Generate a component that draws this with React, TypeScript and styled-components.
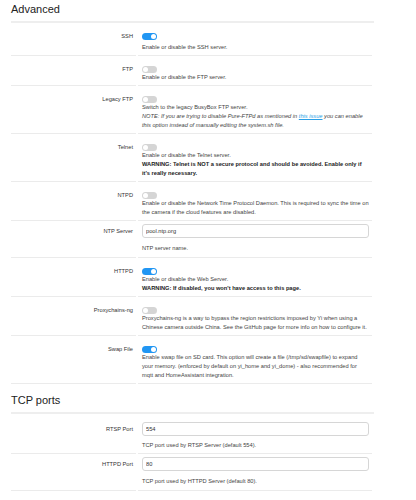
import React from 'react';
import styled, { createGlobalStyle } from 'styled-components';

const GlobalStyle = createGlobalStyle`
  html, body {
    margin: 0;
    padding: 0;
    background: #fff;
  }
  body {
    font-family: "Liberation Sans", Arial, Helvetica, sans-serif;
    color: #444;
  }
`;

const Page = styled.div`
  width: 363px;
  padding: 0 0 0 11px;
`;

const SectionTitle = styled.h2<{ $spaced?: boolean }>`
  margin: ${p => (p.$spaced ? 10 : 3)}px 0 0;
  padding-bottom: 5px;
  font-size: 11px;
  line-height: 13px;
  font-weight: 300;
  color: #222;
  border-bottom: 2px solid #eeeeee;
`;

const Row = styled.div`
  display: grid;
  grid-template-columns: 125px 234px;
  column-gap: 2px;
`;

const Label = styled.div<{ $top: number; $h: number }>`
  padding: ${p => p.$top}px 3px 0 0;
  text-align: right;
  font-size: 5.7px;
  line-height: ${p => p.$h}px;
  color: #333;
  border-bottom: 1px solid #ebebeb;
`;

const Cell = styled.div<{ $top: number; $bottom: number }>`
  padding: ${p => p.$top}px 3px ${p => p.$bottom}px 4px;
  border-bottom: 1px solid #ebebeb;
`;

const Toggle = styled.span<{ $on?: boolean }>`
  position: relative;
  display: block;
  width: 15px;
  height: 7px;
  border-radius: 4px;
  background: ${p => (p.$on ? '#2196f3' : '#d5d5d5')};

  &::after {
    content: '';
    position: absolute;
    top: 1px;
    left: ${p => (p.$on ? 9 : 1)}px;
    width: 5px;
    height: 5px;
    border-radius: 50%;
    background: #fff;
  }
`;

const TextInput = styled.input`
  display: block;
  box-sizing: border-box;
  width: 227px;
  height: 14px;
  margin: 0;
  padding: 0 3px;
  border: 1px solid #d6d6d6;
  border-radius: 3px;
  font-family: "Liberation Sans", Arial, sans-serif;
  font-size: 5.7px;
  color: #333;
  background: #fff;
  outline: none;
`;

const Desc = styled.div<{ $gap: number }>`
  margin-top: ${p => p.$gap}px;
  font-size: 5.7px;
  line-height: 9px;
  color: #444;
  white-space: nowrap;

  em {
    font-style: italic;
  }
  strong {
    color: #222;
  }
  a {
    color: #2a9fe6;
  }
`;

type FieldProps = {
  label: string;
  kind: 'toggle' | 'input';
  first?: boolean;
  on?: boolean;
  value?: string;
  children: React.ReactNode;
};

const Field = ({ label, kind, first, on, value, children }: FieldProps) => {
  const isToggle = kind === 'toggle';
  const top = isToggle ? 10 : first ? 8 : 3;
  const gap = isToggle ? (first ? 3 : 0) : first ? 5 : 6;
  const bottom = isToggle ? 3 : first ? 3 : 4;
  const h = isToggle ? 7 : 14;

  return (
    <Row>
      <Label $top={top} $h={h}>{label}</Label>
      <Cell $top={top} $bottom={bottom}>
        {isToggle ? <Toggle $on={on} /> : <TextInput readOnly value={value} />}
        <Desc $gap={gap}>{children}</Desc>
      </Cell>
    </Row>
  );
};

export default function App() {
  return (
    <Page>
      <GlobalStyle />
      <SectionTitle>Advanced</SectionTitle>
      <Field label="SSH" kind="toggle" on first>
        Enable or disable the SSH server.
      </Field>
      <Field label="FTP" kind="toggle">
        Enable or disable the FTP server.
      </Field>
      <Field label="Legacy FTP" kind="toggle">
        Switch to the legacy BusyBox FTP server.
        <br />
        <em>
          NOTE: If you are trying to disable Pure-FTPd as mentioned in <a href="#issue">this issue</a> you can enable
          <br />
          this option instead of manually editing the system.sh file.
        </em>
      </Field>
      <Field label="Telnet" kind="toggle">
        Enable or disable the Telnet server.
        <br />
        <strong>
          WARNING: Telnet is NOT a secure protocol and should be avoided. Enable only if
          <br />
          it's really necessary.
        </strong>
      </Field>
      <Field label="NTPD" kind="toggle">
        Enable or disable the Network Time Protocol Daemon. This is required to sync the time on
        <br />
        the camera if the cloud features are disabled.
      </Field>
      <Field label="NTP Server" kind="input" value="pool.ntp.org">
        NTP server name.
      </Field>
      <Field label="HTTPD" kind="toggle" on>
        Enable or disable the Web Server.
        <br />
        <strong>WARNING: If disabled, you won't have access to this page.</strong>
      </Field>
      <Field label="Proxychains-ng" kind="toggle">
        Proxychains-ng is a way to bypass the region restrictions imposed by Yi when using a
        <br />
        Chinese camera outside China. See the GitHub page for more info on how to configure it.
      </Field>
      <Field label="Swap File" kind="toggle" on>
        Enable swap file on SD card. This option will create a file (/tmp/sd/swapfile) to expand
        <br />
        your memory. (enforced by default on yi_home and yi_dome) - also recommended for
        <br />
        mqtt and HomeAssistant integration.
      </Field>

      <SectionTitle $spaced>TCP ports</SectionTitle>
      <Field label="RTSP Port" kind="input" value="554" first>
        TCP port used by RTSP Server (default 554).
      </Field>
      <Field label="HTTPD Port" kind="input" value="80">
        TCP port used by HTTPD Server (default 80).
      </Field>
    </Page>
  );
}
